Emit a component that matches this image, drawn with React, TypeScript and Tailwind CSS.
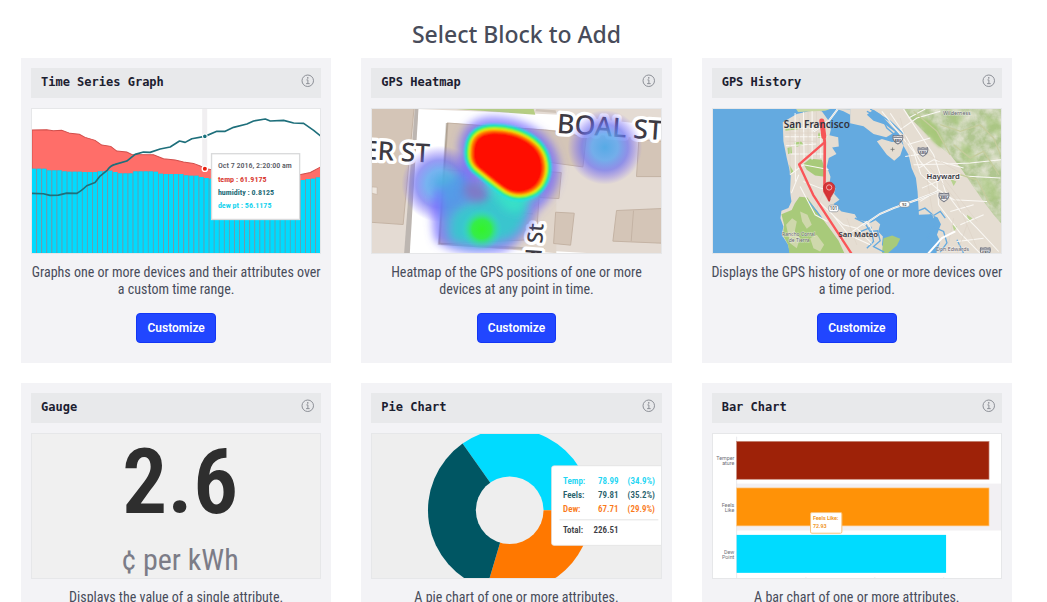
import React from "react";
import { IoInformationCircleOutline } from "react-icons/io5";

const BAR_TOPS = [
  332, 332, 332, 337, 337, 337, 340, 341, 341, 341, 342, 342, 342, 340, 339, 338, 342, 346, 346, 346, 340,
  340, 340, 340, 341, 347, 348, 348, 348, 348, 352, 353, 353, 357, 360, 362, 365, 368, 370, 372, 373, 374,
  375, 375, 374, 373, 372, 371, 370, 369, 368, 367, 366, 366, 363, 362, 358,
];

function TimeSeries() {
  return (
    <svg viewBox="36 153 864 432" preserveAspectRatio="xMidYMid slice" className="block size-full" role="img" aria-label="Time series graph">
      <rect x="36" y="153" width="870" height="432" fill="#fff" />
      <rect x="546" y="153" width="15" height="432" fill="#f1eff1" />
      <path
        d="M36 216L80 215L100 218L125 217L150 226L178 229L195 238L225 247L245 261L272 265L290 279L320 282L335 289L400 290L430 302L465 306L490 312L520 316L540 324L554 331L574 335L640 352L740 364L838 350L870 343L900 327L906 324V585H36Z"
        fill="#ff6e69"
        stroke="#d14e4b"
        strokeWidth="3"
      />
      {BAR_TOPS.map((top, i) => (
        <g key={i}>
          <rect x={34 + i * 15.2} y={top} width="15.4" height={585 - top} fill="#5f9fb0" />
          <rect x={36 + i * 15.2} y={top} width="12.6" height={585 - top} fill="#00dbff" />
        </g>
      ))}
      <path
        d="M36 406L70 407L90 412L115 411L140 405L170 406Q182 400 200 383L225 373L240 354L262 336Q272 322 285 319L320 309L345 289L370 282L390 283L420 273L450 267L478 249L495 253L515 242L554 235L590 220L615 220L640 208L680 198L700 189L735 183L750 189L790 187L820 195L850 196L880 217L902 235"
        fill="none"
        stroke="#1e6f7b"
        strokeWidth="5"
        strokeLinejoin="round"
      />
      <circle cx="554" cy="235" r="7" fill="#16707b" stroke="#fff" strokeWidth="3" />
      <circle cx="554" cy="332" r="8" fill="#e8200f" stroke="#fff" strokeWidth="4" />
      <rect x="574" y="287" width="264" height="197" fill="#fff" stroke="#d9dadb" strokeWidth="4" />
      <g fontFamily="Roboto Condensed, Roboto, sans-serif" fontSize="24" fontWeight="700">
        <text x="593" y="331" fill="#56585f" fontWeight="500">Oct 7 2016, 2:20:00 am</text>
        <text x="593" y="373" fill="#d93c32">temp : 61.9175</text>
        <text x="593" y="411" fill="#256b77">humidity : 0.8125</text>
        <text x="593" y="449" fill="#19d3ee">dew pt : 56.1175</text>
      </g>
    </svg>
  );
}

function Heatmap() {
  const core = "M333 275C335 230 365 216 405 216C450 216 500 232 530 262C560 292 565 340 545 375C525 410 475 420 440 400C410 380 375 350 350 330C335 315 330 300 333 275Z";
  return (
    <svg viewBox="36 153 867 433" preserveAspectRatio="xMidYMid slice" className="block size-full" role="img" aria-label="GPS heatmap">
      <defs>
        <filter id="soft" x="-50%" y="-50%" width="200%" height="200%"><feGaussianBlur stdDeviation="12" /></filter>
        <filter id="edge" x="-20%" y="-20%" width="140%" height="140%"><feGaussianBlur stdDeviation="3" /></filter>
        <radialGradient id="cool">
          <stop offset="0" stopColor="#4fa8e6" stopOpacity=".95" />
          <stop offset=".35" stopColor="#5fa6ee" stopOpacity=".85" />
          <stop offset=".62" stopColor="#6a70f0" stopOpacity=".7" />
          <stop offset=".8" stopColor="#7568f5" stopOpacity=".38" />
          <stop offset="1" stopColor="#7a68ff" stopOpacity="0" />
        </radialGradient>
        <radialGradient id="warm">
          <stop offset="0" stopColor="#34f329" />
          <stop offset=".45" stopColor="#35ed4a" />
          <stop offset="1" stopColor="#32dfcf" stopOpacity="0" />
        </radialGradient>
      </defs>
      <rect x="36" y="153" width="870" height="434" fill="#e4dbd3" />
      <path d="M175 153L600 170L910 205V245L590 222L265 195L244 560L690 586H148Z" fill="#fff" />
      <path d="M165 153H176L150 586H133Z" fill="#bdb6b1" />
      <path d="M290 153H522L527 170Z" fill="#b6ce83" />
      <path d="M527 160L590 165L588 157L530 153" fill="#cfc4b9" />
      <path d="M265 195L590 217V586L244 560Z" fill="#e0d5ca" />
      <path d="M270 200H320L280 300L268 340Z" fill="#bbd287" />
      <g fill="#d4c5b7" stroke="#c4b3a4" strokeWidth="3">
        <path d="M30 148H163L130 500L30 493Z" />
        <path d="M262 195L555 216L590 220L680 238L670 327L545 310L530 545L238 558Z" />
        <path d="M838 245L906 250V356H831Z" />
        <path d="M588 463L644 466L633 562L582 557Z" />
        <path d="M771 458L906 452V556L760 550Z" />
        <path d="M822 458L815 550" />
        <path d="M550 340L605 344L598 422L540 419Z" />
        <path d="M263 394L365 399L361 454L260 448M263 336L312 340V394M260 448L520 468" />
      </g>
      <path d="M36 387L52 388V410L36 406Z" fill="#eee7df" stroke="#c4b3a4" strokeWidth="2" />
      <path d="M262 195L238 558L555 575" fill="none" stroke="#79705f" strokeOpacity=".3" strokeWidth="8" />
      <g fontFamily="Noto Sans, sans-serif" fill="#3d3a43" stroke="#fff" strokeWidth="20" strokeLinejoin="round" paintOrder="stroke">
        <text transform="translate(9 303) rotate(3)" fontSize="78" fontWeight="500">ER ST</text>
        <text transform="translate(591 224) rotate(4)" fontSize="80" fontWeight="500">BOAL ST</text>
        <text transform="translate(544 614) rotate(-86)" fontSize="64" fontWeight="500">d St</text>
      </g>
      <circle cx="736" cy="268" r="112" fill="url(#cool)" />
      <circle cx="240" cy="378" r="115" fill="url(#cool)" />
      <g filter="url(#soft)">
        <path d="M298 275C300 205 345 173 410 176C500 180 595 230 600 330C598 400 565 430 528 465C515 510 480 560 430 582C360 595 260 585 225 545C215 500 215 440 225 400L300 350Z" fill="#6d63ff" fillOpacity=".7" />
        <path d="M235 350L305 345L330 385L400 385L510 430Q510 510 460 545Q350 590 262 550Q245 500 250 430Z" fill="#42b5dc" fillOpacity=".6" />
        <path d="M290 460Q350 430 400 400L500 430Q500 500 450 535Q350 575 280 545Q265 500 290 460Z" fill="#2fd3c8" fillOpacity=".75" />
      </g>
      <ellipse cx="348" cy="403" rx="38" ry="28" transform="rotate(25 348 403)" fill="#8277c4" fillOpacity=".9" filter="url(#soft)" />
      <circle cx="366" cy="514" r="62" fill="url(#warm)" />
      <path d="M390 380L535 405Q490 420 475 455L445 450Z" fill="#37e0c8" stroke="#37e0c8" strokeWidth="18" filter="url(#soft)" />
      <g filter="url(#edge)" strokeLinejoin="round">
        <path d={core} fill="#20e4e0" stroke="#25dfe7" strokeWidth="38" />
        <path d={core} fill="#33f531" stroke="#24ef38" strokeWidth="25" />
        <path d={core} fill="#ffff00" stroke="#f2fa08" strokeWidth="12" />
        <path d={core} fill="#ff7500" stroke="#ff8d00" strokeWidth="2" />
        <path d={core} fill="#ff0800" transform="translate(31 23) scale(.93)" />
      </g>
    </svg>
  );
}

function Shield({ x, y, label }: { x: number; y: number; label: string }) {
  return (
    <g transform={`translate(${x} ${y})`}>
      <path d="M-14 -12Q-7 -9 0 -12Q7 -9 14 -12Q19 4 0 14Q-19 4 -14 -12Z" fill="#eee" stroke="#777a86" strokeWidth="3" />
      <path d="M-14 -6H14" stroke="#777a86" strokeWidth="3" />
      <text y="7" textAnchor="middle" fontSize="12" fontWeight="700" fill="#555965">{label}</text>
    </g>
  );
}

function History() {
  return (
    <svg viewBox="39 153 864 432" preserveAspectRatio="xMidYMid slice" className="block size-full" role="img" aria-label="GPS history map" fontFamily="Noto Sans, sans-serif">
      <defs>
        <filter id="terrain" x="0" y="0" width="100%" height="100%">
          <feTurbulence type="fractalNoise" baseFrequency=".03" numOctaves="4" seed="8" result="n" />
          <feColorMatrix in="n" values="0 0 0 0 .82 0 0 0 0 .81 0 0 0 0 .70 1.6 0 0 0 -.5" result="c" />
          <feComposite in="c" in2="SourceGraphic" operator="in" result="d" />
          <feMerge><feMergeNode in="SourceGraphic" /><feMergeNode in="d" /></feMerge>
        </filter>
        <filter id="fade" x="-20%" y="-20%" width="140%" height="140%"><feGaussianBlur stdDeviation="5" /></filter>
      </defs>
      <rect x="39" y="153" width="870" height="434" fill="#64aae0" />
      <path
        d="M248 193L290 168L340 157L365 160L384 186L392 215L388 232L414 238L416 265L396 268L409 288L386 300L380 325L391 356L388 378L406 390L402 408L418 425L400 438L424 460L464 468L472 484L512 494L526 486L540 498L534 520L548 535L545 560L562 586H270L264 560L245 530L250 505L241 480L244 458L265 450L274 430L270 400L272 350L260 300L250 250Z"
        fill="#e5ddd2"
      />
      <path
        d="M450 153L450 196L490 205L520 228L558 238L585 222L556 200L520 188L500 170L520 155L540 168L575 206L600 230L610 262L600 292L582 308L560 290L530 250L545 243L575 252L602 250L625 290L634 330L647 360L652 400L656 470L690 468L712 478L722 498L710 530L720 550L708 586H906V153Z"
        fill="#e5ddd2"
      />
      <path d="M288 153L294 162L375 158L390 153Z" fill="#c8d8a4" />
      <path d="M410 153L450 154V170L430 160Z" fill="#e5ddd2" />
      <g filter="url(#terrain)" fill="#b0c690">
        <path d="M612 153H906V500L880 470L850 430L815 380L785 335L750 290L705 255L665 215L630 180Z" />
      </g>
      <g fill="#a8ca7a">
        <path d="M244 468L275 456L284 436L298 416L322 418L345 452L382 502L415 547L433 586H268L264 560L248 530L252 500Z" />
        <path d="M310 318L330 302L365 305L372 325L374 356L345 352L320 335Z" />
        <path d="M550 540L576 532L600 542L590 562L562 586H545Z" />
      </g>
      <g fill="#cfd8ac">
        <path d="M258 500L276 480L290 490L284 520L300 540L290 570L270 555ZM300 460L322 470L335 500L320 512L306 490ZM330 540L350 530L372 560L360 580L340 570Z" />
      </g>
      <g fill="#a6c878" filter="url(#fade)">
        <path d="M640 170L680 180L710 205L731 250L720 270L698 250L665 210Z" fillOpacity=".9" />
        <path d="M780 250L810 265L830 300L810 330L785 300ZM840 350L880 370L900 420L870 430L845 390ZM850 170L900 190V240L865 215ZM740 165L790 180L770 210Z" fillOpacity=".5" />
      </g>
      <g fill="#acd080">
        <path d="M256 212L290 207L294 214L256 218Z" />
        <path d="M262 270L274 266L276 287L264 288ZM282 254L303 250L310 260L290 266ZM354 224H374V240H354ZM268 320L280 340L273 350Z" />
        <path d="M750 362L768 370L760 384ZM800 470L816 480L804 492ZM756 500L770 506L762 520Z" fillOpacity=".8" />
      </g>
      <g fill="none" stroke="#64aae0" strokeWidth="4">
        <path d="M464 480L494 494L510 520L532 518L540 548L520 565L552 582M482 520L512 508L520 550L500 570M325 430L350 460L366 482M500 160L545 180L560 210L590 236M510 153L570 190L610 228" />
        <path d="M670 485L694 512L680 536L694 540L680 548M690 468L702 508L730 520L740 554L720 582M770 545L790 586M650 460L674 450L700 472L720 460L735 480" />
      </g>
      <g fill="none" stroke="#faf8f4" strokeWidth="3">
        <path d="M254 210H350M254 236H382M257 263L350 258M268 288H374M285 165L286 370M310 163L312 310M336 160V305M362 190V300M270 350L310 320L385 334M296 350L274 405M310 370L360 390L400 400M300 385L345 470L382 490M350 425L430 500L470 510L515 556M390 460L445 530L510 560M420 545L500 490L526 535" />
        <path d="M610 153L650 215L700 290L720 350L735 400L780 460L830 510L895 580M570 166L620 240L660 310L710 370L715 440L780 525L840 586M640 320L740 318L810 315L906 305M720 350L900 360M545 160L640 280L662 350L720 400M655 330L700 305L790 330M660 430L715 395L760 425L860 430M665 390L745 355M750 460L820 440M780 500L850 470M770 550L850 540M625 180L675 153M600 215L650 180L720 160M620 260L690 240M615 295L680 285" />
      </g>
      <g fill="none" stroke="#ded3c7" strokeWidth="2">
        <path d="M270 200V350M298 180V320M324 160V300M349 160V300M257 225H375M260 250H350M310 360L350 430M375 390L350 450M440 480L470 560M600 180L640 330L680 370M650 270L790 350M680 360L700 480M730 360L830 490M690 330L770 430L830 570M760 480L740 580M800 500L770 586" />
        <path d="M720 200L780 220L840 200L880 240L900 290M760 260L810 300L850 280L896 350M780 350L830 365L870 440M640 160L710 220L750 290" stroke="#c5cc9d" strokeWidth="4" />
      </g>
      <path d="M488 502L540 467L580 450L650 425L715 400M340 220L385 190L413 153M684 586L725 540L765 520" fill="none" stroke="#fff" strokeWidth="6" />
      <path d="M488 502L540 467L580 450L650 425L715 400M340 220L385 190L413 153" fill="none" stroke="#d2cdc3" strokeWidth="2" />
      <Shield x={593} y={244} label="880" />
      <Shield x={668} y={281} label="580" />
      <Shield x={731} y={417} label="880" />
      <Shield x={855} y={581} label="680" />
      <rect x="597" y="430" width="31" height="17" rx="8" fill="#fff" stroke="#888d93" strokeWidth="2" />
      <text x="612" y="443" fontSize="12" fontWeight="600" fill="#555" textAnchor="middle">92</text>
      <rect x="386" y="441" width="29" height="20" rx="6" fill="#fff" stroke="#888d93" strokeWidth="2" />
      <text x="400" y="456" fontSize="13" fontWeight="600" fill="#555" textAnchor="middle">101</text>
      <path d="M577 268V280M571 274H583" stroke="#666" strokeWidth="2" />
      <path d="M364 188L369 230L374 252L297 319L339 410L455 588" fill="none" stroke="#fa5558" strokeWidth="7" strokeLinejoin="round" />
      <path d="M365 187L374 252L373 400L387 425" fill="none" stroke="#f65659" strokeWidth="8" strokeLinecap="round" strokeLinejoin="round" />
      <path d="M365 189L371 235" stroke="#f65558" strokeWidth="15" strokeLinecap="round" />
      <g fontWeight="600" fill="#33333d">
        <text x="251" y="209" fontSize="30">San Francisco</text>
        <text x="679" y="362" fontSize="23" stroke="#fff" strokeOpacity=".75" strokeWidth="4" paintOrder="stroke">Hayward</text>
        <text x="415" y="537" fontSize="23">San Mateo</text>
      </g>
      <g fontSize="16" fill="#63616f" stroke="#fff" strokeOpacity=".5" strokeWidth="3" paintOrder="stroke">
        <text x="728" y="172">Wilderness</text>
        <text x="246" y="535" fontSize="15">Rancho Corral</text>
        <text x="266" y="553" fontSize="15">de Tierra</text>
        <text x="707" y="579">Don Edwards</text>
      </g>
      <path d="M387 430C383 412 370 405 370 389A17 17 0 0 1 404 389C404 405 391 412 387 430Z" fill="#d63336" stroke="#b42a2e" strokeWidth="2" />
      <circle cx="387" cy="388" r="8" fill="#d63336" stroke="#ffe9e6" strokeWidth="2" />
    </svg>
  );
}

function Gauge() {
  return (
    <div className="flex size-full flex-col items-center bg-[#f0f0f0] pt-3 pl-2">
      <span className="font-['Roboto_Condensed','Roboto',sans-serif] text-[90px] leading-[74px] font-semibold text-[#2e2e2e]">2.6</span>
      <span className="mt-6 font-['Roboto_Condensed','Roboto',sans-serif] text-[30px] leading-8 text-[#7c7c87]">¢ per kWh</span>
    </div>
  );
}

function PieChart() {
  return (
    <svg viewBox="35 156 869 435" preserveAspectRatio="xMidYMid slice" className="block size-full" role="img" aria-label="Pie chart">
      <rect x="30" y="150" width="880" height="445" fill="#eee" />
      <path d="M450 386L308 185A246 246 0 0 1 696 386Z" fill="#00dbff" />
      <path d="M450 386H696A246 246 0 0 1 380 622Z" fill="#ff7800" />
      <path d="M450 386L380 622A246 246 0 0 1 308 185Z" fill="#005663" />
      <circle cx="450" cy="386" r="102" fill="#eee" />
      <rect x="576" y="252" width="345" height="240" rx="8" fill="#fff" stroke="#dedede" strokeWidth="2" />
      <path d="M600 415H898" stroke="#e3e3e3" strokeWidth="3" />
      <g fontFamily="Roboto Condensed, Roboto, sans-serif" fontSize="27" fontWeight="600">
        <g fill="#20d5f3">
          <text x="611" y="307">Temp:</text><text x="778" y="307" textAnchor="end">78.99</text><text x="888" y="307" textAnchor="end">(34.9%)</text>
        </g>
        <g fill="#28616b">
          <text x="611" y="350">Feels:</text><text x="778" y="350" textAnchor="end">79.81</text><text x="888" y="350" textAnchor="end">(35.2%)</text>
        </g>
        <g fill="#fa7918">
          <text x="611" y="392">Dew:</text><text x="778" y="392" textAnchor="end">67.71</text><text x="888" y="392" textAnchor="end">(29.9%)</text>
        </g>
        <g fill="#3c3d43">
          <text x="611" y="456">Total:</text><text x="778" y="456" textAnchor="end">226.51</text>
        </g>
      </g>
    </svg>
  );
}

function BarChart() {
  return (
    <svg viewBox="38 156 866 435" preserveAspectRatio="xMidYMid slice" className="block size-full" role="img" aria-label="Bar chart">
      <rect x="30" y="150" width="880" height="445" fill="#fff" />
      <rect x="109" y="306" width="800" height="141" fill="#f2f0f3" />
      <path d="M109 165V595" stroke="#dedee2" strokeWidth="2" />
      <path d="M317 588V593M524 588V593M731 588V593" stroke="#ccc" strokeWidth="2" />
      <rect x="109" y="179" width="758" height="114" fill="#9e2208" stroke="#c78a7a" strokeWidth="2" />
      <rect x="109" y="319" width="758" height="114" fill="#ff9207" stroke="#ffc987" strokeWidth="2" />
      <rect x="109" y="460" width="629" height="114" fill="#00dbff" />
      <g fontFamily="Roboto, sans-serif" fontSize="16" fill="#707078" textAnchor="end">
        <text x="102" y="234">Temper</text><text x="102" y="249">ature</text>
        <text x="102" y="375">Feels</text><text x="102" y="390">Like</text>
        <text x="102" y="516">Dew</text><text x="102" y="531">Point</text>
      </g>
      <rect x="331" y="393" width="94" height="62" rx="4" fill="#fff" stroke="#f7c27b" strokeWidth="3" />
      <g fontFamily="Roboto, sans-serif" fontSize="16" fontWeight="700" fill="#f0971f">
        <text x="338" y="416">Feels Like:</text><text x="338" y="440">72.93</text>
      </g>
    </svg>
  );
}

const blocks = [
  { title: "Time Series Graph", text: "Graphs one or more devices and their attributes over a custom time range.", Preview: TimeSeries },
  { title: "GPS Heatmap", text: "Heatmap of the GPS positions of one or more devices at any point in time.", Preview: Heatmap },
  { title: "GPS History", text: "Displays the GPS history of one or more devices over a time period.", Preview: History },
  { title: "Gauge", text: "Displays the value of a single attribute.", Preview: Gauge },
  { title: "Pie Chart", text: "A pie chart of one or more attributes.", Preview: PieChart },
  { title: "Bar Chart", text: "A bar chart of one or more attributes.", Preview: BarChart },
];

export default function App() {
  return (
    <main className="bg-white pt-4 pr-[35px] pb-5 pl-[21px] font-['Noto_Sans',sans-serif] text-[#484c5a]">
      <h1 className="mb-1.5 text-center text-[23px] leading-9 font-medium">Select Block to Add</h1>
      <div className="grid grid-cols-3 gap-x-[30px] gap-y-5">
        {blocks.map(({ title, text, Preview }) => (
          <article key={title} className="flex flex-col bg-[#f3f3f6] px-2.5 pt-2.5 pb-5">
            <header className="flex h-[30px] items-start justify-between bg-[#e8e9eb] pr-[5px] pl-2.5">
              <h2 className="font-['DejaVu_Sans_Mono',monospace] text-xs leading-7 font-bold text-[#1c2030]">{title}</h2>
              <button type="button" aria-label={`About ${title}`} className="mt-[5px] text-[#8d9097]">
                <IoInformationCircleOutline size={16} />
              </button>
            </header>
            <div className="mt-2.5 border border-[#e6e7e9]">
              <div className="aspect-[2/1] overflow-hidden">
                <Preview />
              </div>
            </div>
            <p className="-mx-px mt-2.5 text-center font-['Roboto_Condensed','Roboto',sans-serif] text-sm leading-[17px]">{text}</p>
            <button type="button" className="mt-[15px] h-[30px] self-center rounded-[4px] border border-[#1236f5] bg-[#2146ff] px-2.5 font-['Roboto',sans-serif] text-xs font-semibold text-white">
              Customize
            </button>
          </article>
        ))}
      </div>
    </main>
  );
}
